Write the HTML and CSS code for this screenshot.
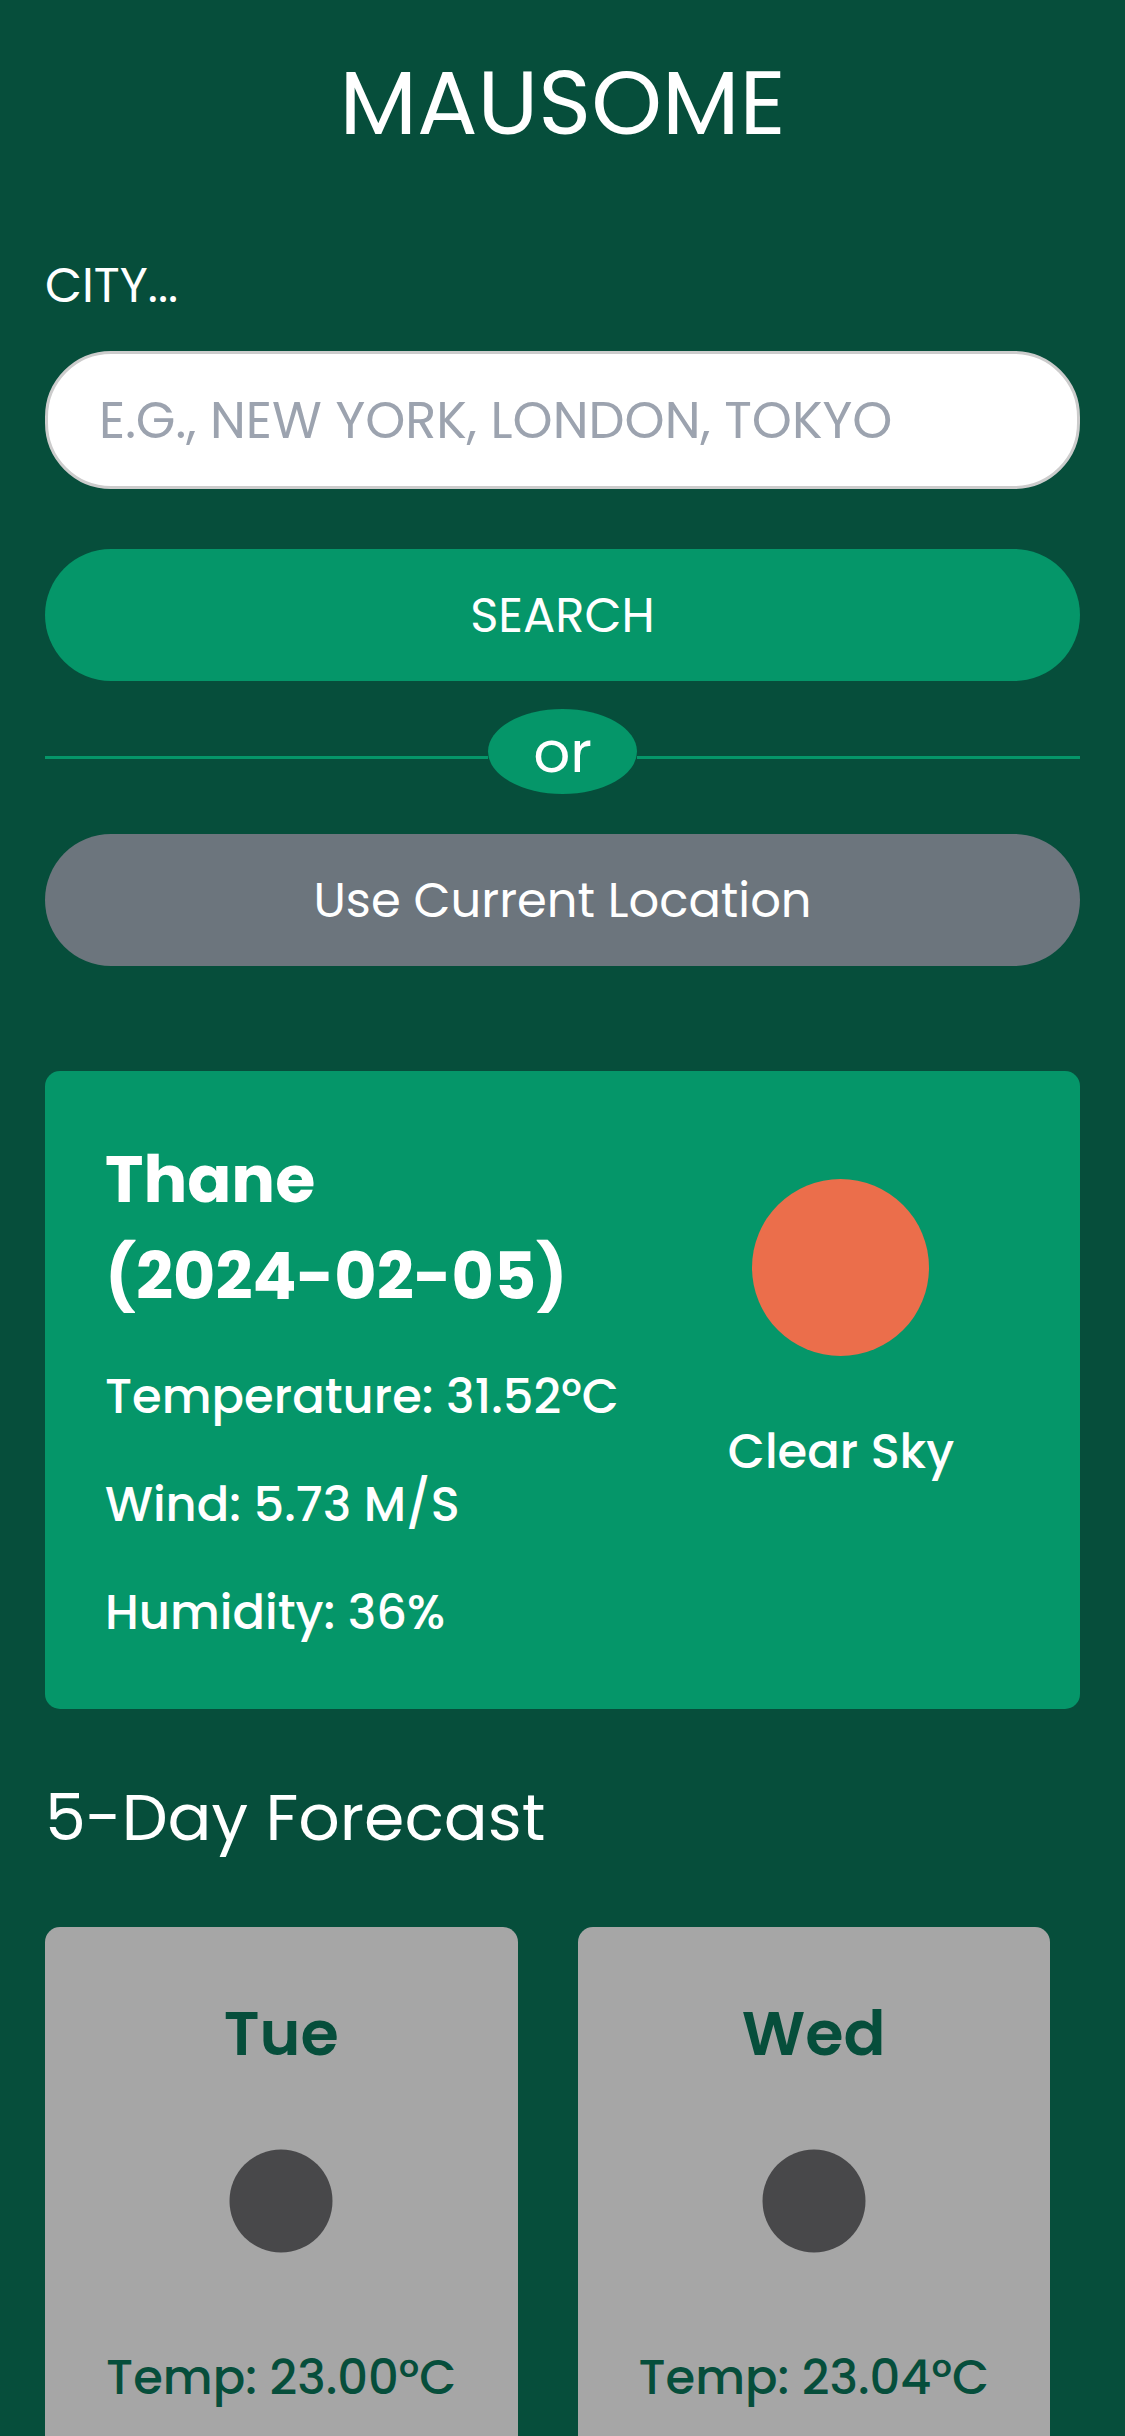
FILE: index.html
```html
<!DOCTYPE html>
<html lang="en">
<head>
  <meta charset="utf-8">
  <meta name="viewport" content="width=device-width, initial-scale=1">
  <title>MAUSOME</title>
  <link rel="stylesheet" href="styles.css">
</head>
<body>
  <header class="site-header">
    <h1 class="site-title">MAUSOME</h1>
  </header>
  <main class="content">
    <form class="search">
      <label class="search-label" for="city">CITY...</label>
      <input class="search-input" id="city" type="text" placeholder="E.G., NEW YORK, LONDON, TOKYO">
      <button class="button button-search" type="button">SEARCH</button>
      <div class="divider"><span class="divider-text">or</span></div>
      <button class="button button-location" type="button">Use Current Location</button>
    </form>

    <section class="current">
      <div class="current-details">
        <h2 class="current-title">Thane<br>(2024-02-05)</h2>
        <p class="reading">Temperature: 31.52°C</p>
        <p class="reading">Wind: 5.73 M/S</p>
        <p class="reading">Humidity: 36%</p>
      </div>
      <div class="current-sky">
        <svg class="sky-icon" viewBox="0 0 273 273" aria-hidden="true"><circle cx="136.5" cy="136.5" r="88.5" fill="#eb6e4b"/></svg>
        <p class="reading">Clear Sky</p>
      </div>
    </section>

    <section class="forecast">
      <h2 class="forecast-title">5-Day Forecast</h2>
      <ul class="days">
        <li class="day">
          <h3 class="day-name">Tue</h3>
          <svg class="day-icon" viewBox="0 0 170 170" aria-hidden="true"><circle cx="85" cy="85" r="51.5" fill="#48484a"/></svg>
          <p class="reading">Temp: 23.00°C</p>
        </li>
        <li class="day">
          <h3 class="day-name">Wed</h3>
          <svg class="day-icon" viewBox="0 0 170 170" aria-hidden="true"><circle cx="85" cy="85" r="51.5" fill="#48484a"/></svg>
          <p class="reading">Temp: 23.04°C</p>
        </li>
      </ul>
    </section>
  </main>
</body>
</html>
```
FILE: styles.css
```css
*,
*::before,
*::after {
  box-sizing: border-box;
}

body {
  display: flex;
  flex-direction: column;
  min-height: 100vh;
  margin: 0;
  background: #064e3b;
  color: #fff;
  font-family: Poppins, Inter, "Open Sans", sans-serif;
  font-size: 48px;
  line-height: 72px;
}

h1,
h2,
h3,
p,
ul {
  margin: 0;
  padding: 0;
}

.site-header {
  padding: 35px 45px 80px;
  text-align: center;
}

.site-title {
  font-size: 90px;
  font-weight: 400;
  line-height: 135px;
}

.content {
  display: flex;
  flex: 1;
  flex-direction: column;
  padding: 0 45px;
}

.search {
  display: flex;
  flex-direction: column;
}

.search-label {
  margin-bottom: 29px;
}

.search-input {
  width: 100%;
  height: 138px;
  padding: 0 51px;
  border: 3px solid #ccc;
  border-radius: 66px;
  background: #fff;
  color: #064e3b;
  font: inherit;
  font-size: 51px;
}

.search-input::placeholder {
  color: #9ca3af;
  opacity: 1;
}

.button {
  padding: 31px 30px 29px;
  border: 0;
  border-radius: 66px;
  color: #fff;
  font: inherit;
}

.button-search {
  margin-top: 60px;
  background: #059669;
}

.button-location {
  background: #6c757d;
}

.divider {
  display: flex;
  align-items: center;
  margin: 28px 0 40px;
}

.divider::before,
.divider::after {
  flex: 1;
  height: 3px;
  margin-top: 12px;
  background: #059669;
  content: "";
}

.divider-text {
  padding: 0 45px;
  border-radius: 50%;
  background: #059669;
  font-size: 58px;
  line-height: 85px;
}

.current {
  display: grid;
  grid-template-columns: 14fr 9fr;
  margin-top: 105px;
  padding: 60px;
  border-radius: 15px;
  background: #059669;
  font-weight: 500;
}

.current-details {
  display: flex;
  flex-direction: column;
  gap: 36px;
}

.current-title {
  font-size: 65px;
  font-weight: 700;
  line-height: 97px;
}

.current-sky {
  display: flex;
  flex-direction: column;
  align-items: center;
  gap: 12px;
}

.sky-icon {
  width: 273px;
  height: 273px;
}

.reading {
  white-space: nowrap;
}

.forecast {
  display: flex;
  flex: 1;
  flex-direction: column;
  margin-top: 60px;
}

.forecast-title {
  font-size: 65px;
  font-weight: 400;
  line-height: 97px;
}

.days {
  display: grid;
  flex: 1;
  grid-template-columns: 1fr 1fr;
  gap: 60px;
  margin: 61px 30px 0 0;
  list-style: none;
}

.day {
  display: flex;
  flex-direction: column;
  align-items: center;
  padding-top: 60px;
  border-radius: 15px 15px 0 0;
  background: #a6a6a6;
  color: #064e3b;
  font-weight: 500;
}

.day-name {
  font-size: 62px;
  font-weight: 600;
  line-height: 93px;
}

.day-icon {
  width: 170px;
  height: 170px;
  margin: 36px 0 56px;
}
```
